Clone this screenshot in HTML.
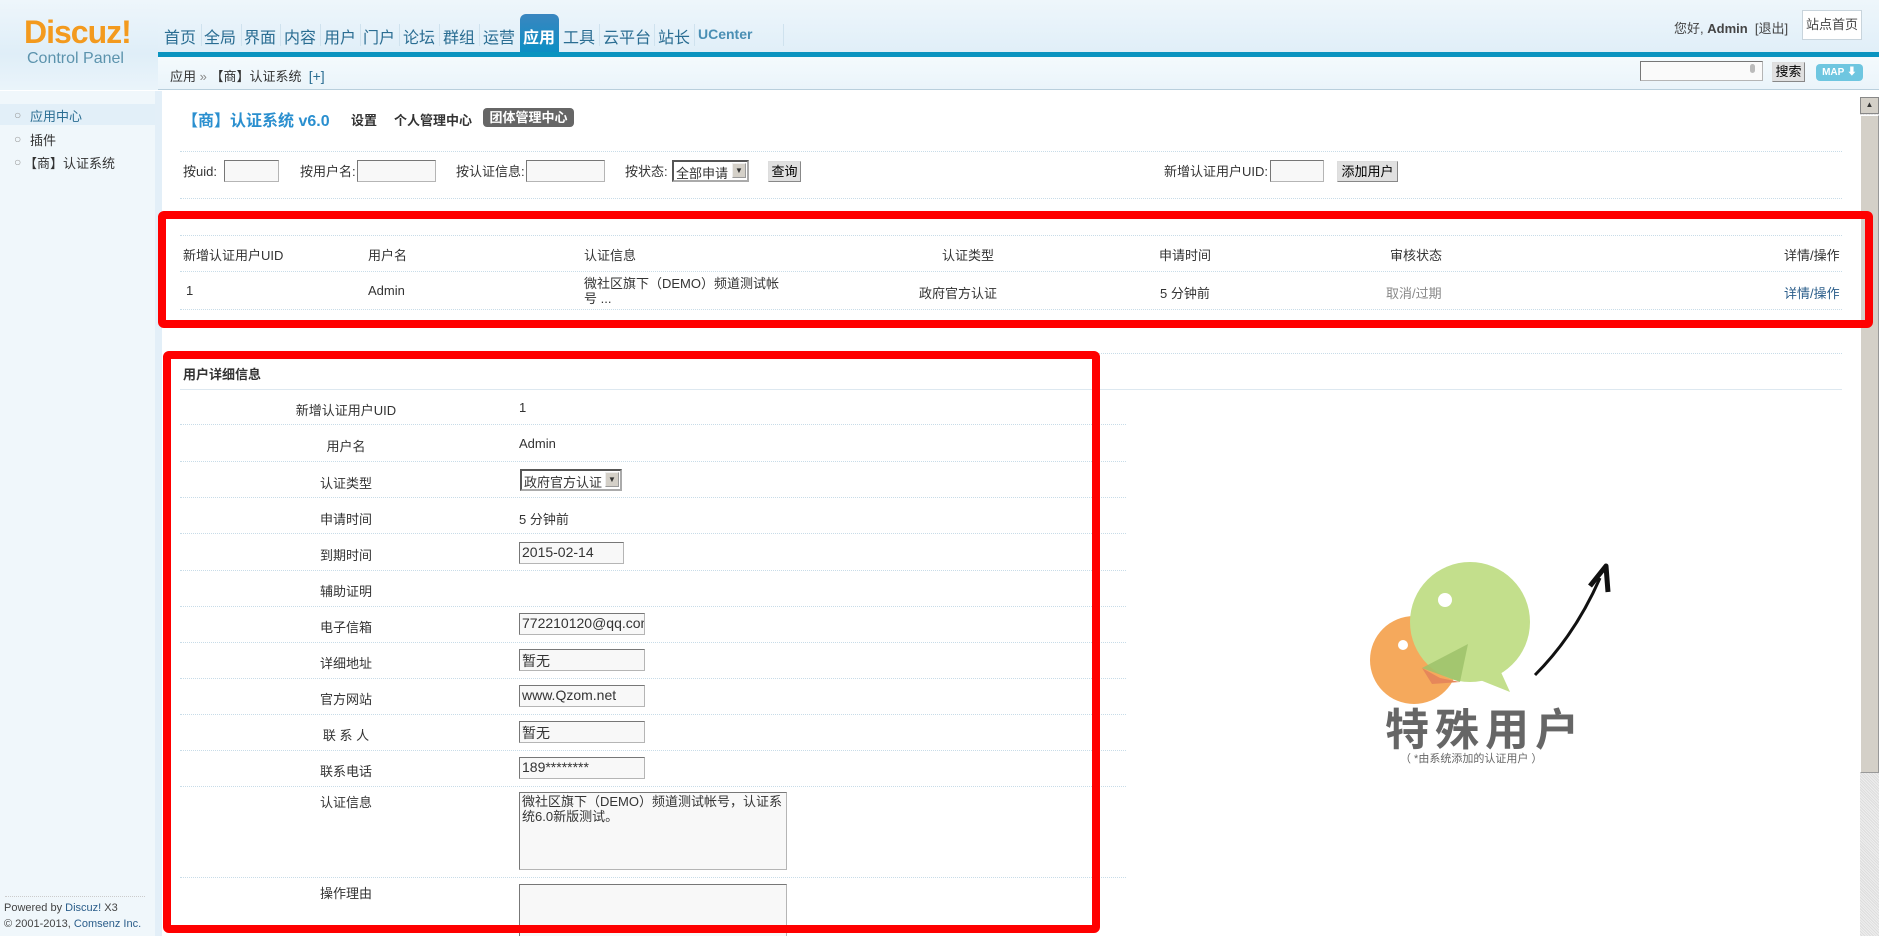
<!DOCTYPE html>
<html><head><meta charset="utf-8">
<style>
*{margin:0;padding:0;box-sizing:border-box}
body{width:1879px;height:936px;overflow:hidden;position:relative;background:#fff;font-family:"Liberation Sans","Noto Sans CJK SC",sans-serif;font-size:13px;color:#333}
.a{position:absolute;white-space:nowrap}
#hd{position:absolute;left:0;top:0;width:1879px;height:57px;background:linear-gradient(#eef6fb,#dfeef8)}
#hdl{position:absolute;left:0;top:0;width:158px;height:90px;background:linear-gradient(#eef6fb,#dfeef8 60%,#eaf4fa)}
.nav{position:absolute;top:24px;font-size:16px;color:#2a6d92;}
.sep{position:absolute;top:24px;width:1px;height:22px;background:#cfe2ee}
#bar{position:absolute;left:158px;top:52px;width:1721px;height:5px;background:#0a94c0}
#crumb{position:absolute;left:158px;top:57px;width:1721px;height:33px;background:linear-gradient(#f4fafd,#eaf4fa);border-bottom:1px solid #b9cfdc}
#side{position:absolute;left:0;top:91px;width:155px;height:845px;background:#f0f7fb}
#sideb{position:absolute;left:155px;top:91px;width:7px;height:845px;background:#e3eff8}
.inp{position:absolute;height:22px;border:1px solid #b5b5b5;border-top-color:#777;border-left-color:#777;background:#f8f8f8;font-size:14px;padding:1px 2px;color:#333;overflow:hidden}
.btn{position:absolute;height:21px;border:1px solid #888;border-top-color:#ddd;border-left-color:#ddd;background:#e0e0e0;font-size:13px;color:#000;text-align:center;line-height:19px}
.dl{position:absolute;height:0;border-top:1px dotted #c8dce8}
.red{position:absolute;border:8px solid #f00;border-radius:6px}
.lb{position:absolute;width:200px;text-align:center;left:246px;font-size:13px}
.vl{position:absolute;left:519px;font-size:13px}
</style></head><body>
<div id="hd"></div>
<div id="hdl"></div>
<div class="a" style="left:24px;top:14px;font-size:32px;font-weight:bold;color:#f39a1e;letter-spacing:-1px">Discuz!</div>
<div class="a" style="left:27px;top:50px;font-size:16px;color:#5c93ad">Control Panel</div>

<div style="position:absolute;left:520px;top:14px;width:39px;height:40px;border-radius:6px 6px 0 0;background:linear-gradient(#3a86c0,#0a8fc4)"></div>
<div class="nav" style="left:164px">首页</div><div class="sep" style="left:201px"></div>
<div class="nav" style="left:204px">全局</div><div class="sep" style="left:241px"></div>
<div class="nav" style="left:244px">界面</div><div class="sep" style="left:280px"></div>
<div class="nav" style="left:284px">内容</div><div class="sep" style="left:320px"></div>
<div class="nav" style="left:324px">用户</div><div class="sep" style="left:360px"></div>
<div class="nav" style="left:363px">门户</div><div class="sep" style="left:399px"></div>
<div class="nav" style="left:403px">论坛</div><div class="sep" style="left:439px"></div>
<div class="nav" style="left:443px">群组</div><div class="sep" style="left:479px"></div>
<div class="nav" style="left:483px">运营</div>
<div class="nav" style="left:523px;color:#fff;font-weight:bold">应用</div>
<div class="nav" style="left:563px">工具</div><div class="sep" style="left:599px"></div>
<div class="nav" style="left:603px">云平台</div><div class="sep" style="left:654px"></div>
<div class="nav" style="left:658px">站长</div><div class="sep" style="left:694px"></div>
<div class="nav" style="left:698px;font-size:14px;font-weight:bold;top:26px;color:#4a8fb4">UCenter</div><div class="sep" style="left:783px"></div>
<div class="a" style="left:1674px;top:18px;font-size:13px;color:#444">您好, <b>Admin</b> &nbsp;[退出]</div>
<div class="a" style="left:1802px;top:10px;width:60px;height:30px;border:1px solid #c8d4dc;background:#fff;font-size:13px;text-align:center;line-height:28px;color:#444">站点首页</div>
<div id="bar"></div>
<div id="crumb"></div>
<div class="a" style="left:170px;top:66px;font-size:13px;color:#333">应用 <span style="color:#888">»</span> 【商】认证系统 &nbsp;<span style="color:#2a6d92;font-size:14px">[+]</span></div>
<div class="inp" style="left:1640px;top:61px;width:123px;height:20px;background:#fafafa"></div>
<div class="a" style="left:1750px;top:64px;width:5px;height:9px;border-radius:3px;background:#bbb"></div>
<div class="btn" style="left:1772px;top:62px;width:33px;height:20px;line-height:18px">搜索</div>
<div class="a" style="left:1816px;top:64px;width:47px;height:17px;border-radius:4px;background:#6ec6e0;color:#fff;font-size:10px;font-weight:bold;text-align:center;line-height:17px">MAP ⬇</div>

<div id="side"></div><div id="sideb"></div>
<div class="a" style="left:0;top:104px;width:155px;height:21px;background:#e2eff8"></div>
<div class="a" style="left:14px;top:108px;font-size:12px;color:#999">○</div><div class="a" style="left:30px;top:106px;color:#2a6d92">应用中心</div>
<div class="a" style="left:14px;top:132px;font-size:12px;color:#999">○</div><div class="a" style="left:30px;top:130px">插件</div>
<div class="a" style="left:14px;top:155px;font-size:12px;color:#999">○</div><div class="a" style="left:24px;top:153px">【商】认证系统</div>
<div class="dl" style="left:5px;top:896px;width:140px;border-top-color:#ccc"></div>
<div class="a" style="left:4px;top:902px;font-size:11px;color:#444">Powered by <span style="color:#2a5d8a">Discuz!</span> X3</div>
<div class="a" style="left:4px;top:918px;font-size:11px;color:#444">© 2001-2013, <span style="color:#2a5d8a">Comsenz Inc.</span></div>

<!-- scrollbar -->
<div class="a" style="left:1860px;top:97px;width:19px;height:839px;background:repeating-linear-gradient(45deg,#eee 0 1px,#ddd 1px 2px)"></div>
<div class="a" style="left:1860px;top:97px;width:19px;height:17px;background:#d4d0c8;border:1px solid #888;font-size:8px;text-align:center;line-height:14px">▲</div>
<div class="a" style="left:1860px;top:115px;width:19px;height:658px;background:#d4d0c8;border:1px solid #999;border-top-color:#fff;border-left-color:#fff"></div>

<!-- title -->
<div class="a" style="left:182px;top:107px;font-size:16px;font-weight:bold;color:#2a8fcf">【商】认证系统 v6.0</div>
<div class="a" style="left:351px;top:110px;font-size:13px;font-weight:bold;color:#333">设置</div>
<div class="a" style="left:394px;top:110px;font-size:13px;font-weight:bold;color:#333">个人管理中心</div>
<div class="a" style="left:483px;top:108px;width:91px;height:19px;border-radius:4px;background:#666;color:#fff;font-weight:bold;font-size:13px;text-align:center;line-height:19px">团体管理中心</div>
<div class="dl" style="left:180px;top:151px;width:1662px"></div>
<div class="a" style="left:183px;top:161px">按uid:</div><div class="inp" style="left:224px;top:160px;width:55px"></div>
<div class="a" style="left:300px;top:161px">按用户名:</div><div class="inp" style="left:357px;top:160px;width:79px"></div>
<div class="a" style="left:456px;top:161px">按认证信息:</div><div class="inp" style="left:526px;top:160px;width:79px"></div>
<div class="a" style="left:625px;top:161px">按状态:</div>
<div class="inp" style="left:672px;top:160px;width:77px;border:2px inset #aaa;background:#fff;font-size:13px">全部申请<span style="position:absolute;right:1px;top:1px;width:14px;height:15px;background:#d4d0c8;border:1px outset #eee;font-size:8px;text-align:center;line-height:14px">▼</span></div>
<div class="btn" style="left:768px;top:161px;width:33px">查询</div>
<div class="a" style="left:1164px;top:161px">新增认证用户UID:</div><div class="inp" style="left:1270px;top:160px;width:54px"></div>
<div class="btn" style="left:1337px;top:161px;width:61px">添加用户</div>
<div class="dl" style="left:180px;top:198px;width:1662px"></div>

<!-- table -->
<div class="dl" style="left:180px;top:235px;width:1662px"></div>
<div class="dl" style="left:180px;top:271px;width:1662px"></div>
<div class="dl" style="left:180px;top:309px;width:1662px"></div>
<div class="a" style="left:183px;top:245px">新增认证用户UID</div>
<div class="a" style="left:368px;top:245px">用户名</div>
<div class="a" style="left:584px;top:245px">认证信息</div>
<div class="a" style="left:942px;top:245px">认证类型</div>
<div class="a" style="left:1159px;top:245px">申请时间</div>
<div class="a" style="left:1390px;top:245px">审核状态</div>
<div class="a" style="left:1784px;top:245px">详情/操作</div>
<div class="a" style="left:186px;top:283px">1</div>
<div class="a" style="left:368px;top:283px">Admin</div>
<div class="a" style="left:584px;top:276px;line-height:15px">微社区旗下（DEMO）频道测试帐<br>号 ...</div>
<div class="a" style="left:919px;top:283px">政府官方认证</div>
<div class="a" style="left:1160px;top:283px">5 分钟前</div>
<div class="a" style="left:1386px;top:283px;color:#888">取消/过期</div>
<div class="a" style="left:1784px;top:283px;color:#2a5d8a">详情/操作</div>
<div class="red" style="left:158px;top:211px;width:1715px;height:117px"></div>

<div class="dl" style="left:180px;top:353px;width:1662px"></div>
<div class="a" style="left:183px;top:364px;font-weight:bold;font-size:13px">用户详细信息</div>
<div class="dl" style="left:180px;top:389px;width:1662px;border-top:1px solid #dde8f0"></div>

<div class="lb" style="top:400px">新增认证用户UID</div><div class="vl" style="top:400px">1</div>
<div class="lb" style="top:436px">用户名</div><div class="vl" style="top:436px">Admin</div>
<div class="lb" style="top:473px">认证类型</div>
<div class="inp" style="left:520px;top:469px;width:102px;border:2px inset #aaa;background:#fff;font-size:13px">政府官方认证<span style="position:absolute;right:1px;top:1px;width:14px;height:15px;background:#d4d0c8;border:1px outset #eee;font-size:8px;text-align:center;line-height:14px">▼</span></div>
<div class="lb" style="top:509px">申请时间</div><div class="vl" style="top:509px">5 分钟前</div>
<div class="lb" style="top:545px">到期时间</div><div class="inp" style="left:519px;top:542px;width:105px">2015-02-14</div>
<div class="lb" style="top:581px">辅助证明</div>
<div class="lb" style="top:617px">电子信箱</div><div class="inp" style="left:519px;top:613px;width:126px">772210120@qq.com</div>
<div class="lb" style="top:653px">详细地址</div><div class="inp" style="left:519px;top:649px;width:126px">暂无</div>
<div class="lb" style="top:689px">官方网站</div><div class="inp" style="left:519px;top:685px;width:126px">www.Qzom.net</div>
<div class="lb" style="top:725px">联 系 人</div><div class="inp" style="left:519px;top:721px;width:126px">暂无</div>
<div class="lb" style="top:761px">联系电话</div><div class="inp" style="left:519px;top:757px;width:126px">189********</div>
<div class="lb" style="top:792px">认证信息</div>
<div class="inp" style="left:519px;top:792px;width:268px;height:78px;white-space:normal;font-size:13px;line-height:15px">微社区旗下（DEMO）频道测试帐号，认证系统6.0新版测试。</div>
<div class="lb" style="top:883px">操作理由</div>
<div class="inp" style="left:519px;top:884px;width:268px;height:52px;border-bottom:none"></div>
<div class="dl" style="left:180px;top:424px;width:946px"></div>
<div class="dl" style="left:180px;top:461px;width:946px"></div>
<div class="dl" style="left:180px;top:497px;width:946px"></div>
<div class="dl" style="left:180px;top:533px;width:946px"></div>
<div class="dl" style="left:180px;top:570px;width:946px"></div>
<div class="dl" style="left:180px;top:606px;width:946px"></div>
<div class="dl" style="left:180px;top:642px;width:946px"></div>
<div class="dl" style="left:180px;top:678px;width:946px"></div>
<div class="dl" style="left:180px;top:714px;width:946px"></div>
<div class="dl" style="left:180px;top:750px;width:946px"></div>
<div class="dl" style="left:180px;top:786px;width:946px"></div>
<div class="dl" style="left:180px;top:877px;width:946px"></div>
<div class="red" style="left:163px;top:351px;width:937px;height:582px"></div>

<!-- graphic -->
<svg class="a" style="left:1360px;top:560px" width="280" height="160" viewBox="0 0 280 160">
<circle cx="54" cy="100" r="44" fill="#f5a95c"/>
<circle cx="110" cy="62" r="60" fill="#c3df8c"/>
<path d="M140 110 L150 132 L120 120Z" fill="#c3df8c"/>
<path d="M62 108 L108 84 L100 122Z" fill="#9dc26a" opacity=".85"/>
<path d="M62 108 L80 118 L100 122 L72 124Z" fill="#e6875a"/>
<circle cx="85" cy="40" r="7" fill="#fff"/><circle cx="43" cy="85" r="5" fill="#fff"/>
<path d="M175 115 Q215 75 240 18" stroke="#111" stroke-width="3" fill="none"/>
<path d="M230 26 L246 6 L248 32" stroke="#111" stroke-width="5" fill="none" stroke-linejoin="round"/>
</svg>
<div class="a" style="left:1385px;top:694px;font-size:44px;font-weight:bold;color:#666;letter-spacing:6px">特殊用户</div>
<div class="a" style="left:1400px;top:750px;font-size:11px;color:#666">（ *由系统添加的认证用户 ）</div>
</body></html>
